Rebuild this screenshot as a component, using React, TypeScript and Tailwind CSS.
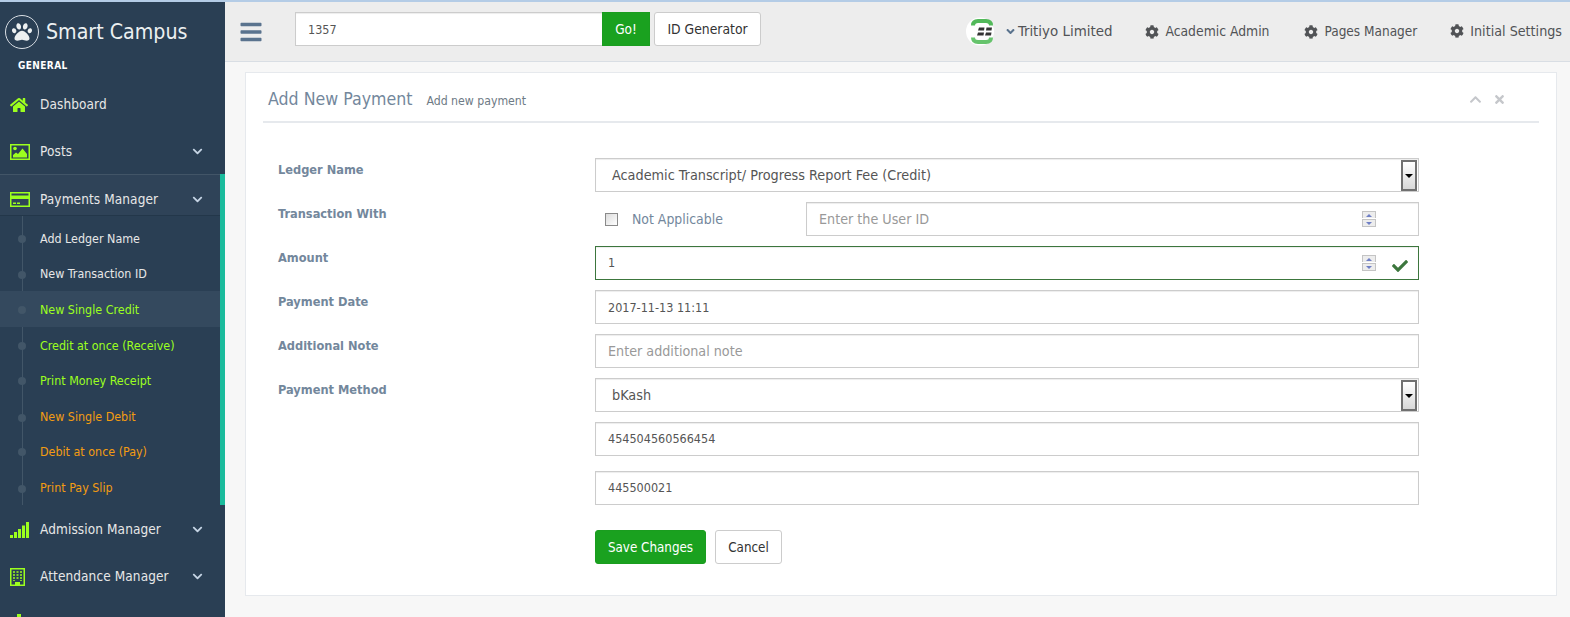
import React from "react";
import { FaHome, FaCog, FaPaw, FaBars, FaCheck, FaChevronUp, FaChevronDown, FaTimes, FaAngleDown } from "react-icons/fa";

const F = '[font-family:"DejaVu_Sans_Condensed","DejaVu_Sans",sans-serif]';

function ImageIcon() {
  return (
    <svg viewBox="0 0 20 16" className="h-[16px] w-[20px]" fill="#9CFF1E">
      <path fillRule="evenodd" d="M0 0 H20 V16 H0 Z M1.5 1.5 V14.5 H18.5 V1.5 Z" />
      <circle cx="5" cy="4.5" r="1.8" />
      <path d="M3 13.5 V11 L6 8.5 L8 10 L12.5 4.5 L17 10 V13.5 Z" />
    </svg>
  );
}

function CardIcon() {
  return (
    <svg viewBox="0 0 20 15" className="h-[15px] w-[20px]" fill="#9CFF1E">
      <path fillRule="evenodd" d="M0 0 H20 V15 H0 Z M1.5 1.5 V3.5 H18.5 V1.5 Z M1.5 7 V13.5 H18.5 V7 Z" />
      <rect x="3" y="10.5" width="3" height="1.5" />
      <rect x="7" y="10.5" width="3" height="1.5" />
    </svg>
  );
}

function SignalIcon() {
  return (
    <svg viewBox="0 0 19 16" className="h-[16px] w-[19px]" fill="#9CFF1E">
      <rect x="0" y="13" width="3" height="3" />
      <rect x="4" y="10" width="3" height="6" />
      <rect x="8" y="7" width="3" height="9" />
      <rect x="12" y="3.500" width="3" height="12.500" />
      <rect x="16" y="0" width="3" height="16" />
    </svg>
  );
}

function BuildingIcon() {
  return (
    <svg viewBox="0 0 15 18" className="h-[18px] w-[15px]" fill="#9CFF1E">
      <path fillRule="evenodd" d="M0 0 H15 V18 H0 Z M1.500 1.500 V16.500 H5 V14 H10 V16.500 H13.500 V1.500 Z" />
      <path d="M3 3 H5 V5 H3 Z M6.500 3 H8.500 V5 H6.500 Z M10 3 H12 V5 H10 Z M3 6 H5 V8 H3 Z M6.500 6 H8.500 V8 H6.500 Z M10 6 H12 V8 H10 Z M3 9 H5 V11 H3 Z M6.500 9 H8.500 V11 H6.500 Z M10 9 H12 V11 H10 Z M3 12 H5 V13 H3 Z M10 12 H12 V13 H10 Z" opacity="0.75" />
    </svg>
  );
}

function ChartIcon() {
  return (
    <svg viewBox="0 0 20 18" className="h-[18px] w-[20px]" fill="#9CFF1E">
      <rect x="0" y="9" width="4" height="9" />
      <rect x="7" y="0" width="4" height="18" />
      <rect x="14" y="5" width="4" height="13" />
    </svg>
  );
}

function Nav({ icon, label, chevron, active, size = "h-[47px]" }: { icon: React.ReactNode; label?: string; chevron?: boolean; active?: boolean; size?: string }) {
  return (
    <div className={`flex items-center ${size} pl-[10px] ${active ? "pr-[17px]" : "pr-[22px]"} text-[13.5px] text-[#E7E7E7]`}>
      <span className="flex w-[30px] text-[#9CFF1E]">{icon}</span>
      <span className="flex-1 tracking-[0.1px]">{label}</span>
      {chevron && <FaChevronDown className="text-[11px] text-[#C5D4E4]" />}
    </div>
  );
}

function Sub({ label, color, current, h }: { label: string; color: string; current?: boolean; h: string }) {
  return (
    <div className={`relative flex items-center ${h} pl-[40px] text-[12.4px] ${color} ${current ? "bg-[#34495E]" : ""}`}>
      <span className="absolute left-[18px] h-[8px] w-[8px] rounded-full bg-[#425668]" />
      {label}
    </div>
  );
}

function Field({ children, className = "h-[34px]", border = "border-[#CCCCCC]" }: { children: React.ReactNode; className?: string; border?: string }) {
  return <div className={`relative flex items-center border ${border} bg-white shadow-[inset_0_1px_1px_rgba(0,0,0,0.075)] ${className}`}>{children}</div>;
}

function Spin() {
  return (
    <span className="absolute right-[42px] top-[8px] flex h-[16px] w-[14px] flex-col justify-between">
      <span className="flex h-[7px] items-center justify-center border-x border-t border-[#C4C4C4] bg-[#EDEDED]"><span className="h-0 w-0 border-x-[3px] border-b-[3px] border-x-transparent border-b-[#6F7FC5]" /></span>
      <span className="flex h-[8px] items-center justify-center border border-[#C4C4C4] bg-[#EDEDED]"><span className="h-0 w-0 border-x-[3px] border-t-[3px] border-x-transparent border-t-[#6F7FC5]" /></span>
    </span>
  );
}

function Arrow() {
  return (
    <span className="absolute right-[1px] top-[1px] flex h-[31px] w-[16px] items-center justify-center border-2 border-[#707070] bg-gradient-to-b from-white to-[#D8D8D8]">
      <span className="h-0 w-0 border-x-[4px] border-t-[4px] border-x-transparent border-t-black" />
    </span>
  );
}

function Row({ label, mb = "mb-[10px]", children }: { label?: string; mb?: string; children: React.ReactNode }) {
  return (
    <div className={`flex ${mb}`}>
      <div className="w-[317px] pt-[4px] text-[12.7px] font-bold leading-[16px] text-[#73879C]">{label}</div>
      <div className="w-[824px]">{children}</div>
    </div>
  );
}

function TopLink({ label, ml = "ml-[33px]", size = "text-[13.8px]" }: { label: string; ml?: string; size?: string }) {
  return (
    <span className={`${ml} flex items-center gap-[6px] ${size} text-[#515356]`}>
      <FaCog className="text-[14px]" />
      {label}
    </span>
  );
}

const inputText = "w-full bg-transparent pl-[12px] text-[12.5px] text-[#555555] outline-none";
const inputLow = "w-full bg-transparent pl-[12px] pt-[2px] text-[12.5px] text-[#555555] outline-none";
const inputHolder = "w-full bg-transparent pl-[12px] pt-[2px] text-[14.2px] outline-none placeholder:text-[#999999]";

export default function App() {
  return (
    <div className={`flex h-[617px] w-[1570px] flex-col overflow-hidden bg-[#F7F7F7] ${F}`}>
      <div className="h-[2px] shrink-0 bg-[#B4CCE6]" />
      <div className="flex min-h-0 flex-1">
        <aside className="w-[225px] shrink-0 overflow-hidden bg-[#2A3F54]">
          <div className="flex h-[58px] items-center pb-[1px] pl-[5px] pt-[2px]">
            <span className="flex h-[34px] w-[34px] items-center justify-center rounded-full border border-[#D9DEE4] text-[20px] text-[#ECF0F1]"><FaPaw /></span>
            <span className="ml-[7px] text-[21.2px] text-[#ECF0F1]">Smart Campus</span>
          </div>
          <div className="pl-[18px] text-[10px] font-bold leading-[12px] tracking-[0.4px] text-white">GENERAL</div>
          <div className="h-[9px]" />
          <Nav icon={<FaHome className="text-[18px]" />} label="Dashboard" />
          <Nav icon={<ImageIcon />} label="Posts" chevron />
          <div className="mt-[-1px] border-r-[5px] border-[#1ABB9C]">
            <div className="border-y border-t-[#425567] border-b-[#23374A] bg-[#2F4358]">
              <Nav icon={<CardIcon />} label="Payments Manager" chevron active size="h-[40px] pt-[8px]" />
            </div>
            <div className="relative">
              <span className="absolute bottom-0 left-[22px] top-0 w-px bg-[#425668]" />
              <Sub label="Add Ledger Name" color="text-[#E7E7E7]" h="h-[40px] pt-[6px]" />
              <Sub label="New Transaction ID" color="text-[#E7E7E7]" h="h-[35px] pt-[2px]" />
              <Sub label="New Single Credit" color="text-[#9CFF1E]" current h="h-[36px] pt-[2px]" />
              <Sub label="Credit at once (Receive)" color="text-[#9CFF1E]" h="h-[36px] pt-[2px]" />
              <Sub label="Print Money Receipt" color="text-[#9CFF1E]" h="h-[36px]" />
              <Sub label="New Single Debit" color="text-[#F39C12]" h="h-[35px] pt-[2px]" />
              <Sub label="Debit at once (Pay)" color="text-[#F39C12]" h="h-[36px]" />
              <Sub label="Print Pay Slip" color="text-[#F39C12]" h="h-[35px] pt-[2px]" />
            </div>
          </div>
          <Nav icon={<SignalIcon />} label="Admission Manager" chevron size="h-[47px] pt-[2px]" />
          <Nav icon={<BuildingIcon />} label="Attendance Manager" chevron size="h-[47px] pt-[2px]" />
          <Nav icon={<ChartIcon />} />
        </aside>
        <main className="flex min-w-0 flex-1 flex-col">
          <header className="flex h-[60px] shrink-0 items-center border-b border-[#D9DEE4] bg-[#EDEDED] pl-[14px] pr-[8px]">
            <FaBars className="text-[24px] text-[#5A738E]" />
            <div className="ml-[32px] mt-[10px] flex h-[34px] w-[355px] self-start">
              <input readOnly value="1357" className="h-full min-w-0 flex-1 border border-r-0 border-[#CCCCCC] bg-white pl-[12px] text-[12.5px] text-[#555555] shadow-[inset_0_1px_1px_rgba(0,0,0,0.075)] outline-none" />
              <span className="flex h-full w-[48px] items-center justify-center border border-[#1A9D1F] bg-[#1AA11F] text-[13.5px] text-white">Go!</span>
            </div>
            <span className="ml-[4px] mt-[10px] flex h-[34px] w-[107px] items-center justify-center self-start rounded-[3px] border border-[#CCCCCC] bg-white text-[13.8px] text-[#333333]">ID Generator</span>
            <span className="flex-1" />
            <svg viewBox="0 0 28 29" className="h-[29px] w-[28px]">
              <circle cx="14" cy="14.500" r="14" fill="#FFFFFF" />
              <path d="M7 8.500 Q7 4 12 4 H20 Q25 4 25 8.500" fill="none" stroke="#52B95A" strokeWidth="4" />
              <path d="M7 20.500 Q7 25 12 25 H20 Q25 25 25 20.500" fill="none" stroke="#66C36C" strokeWidth="4" />
              <path d="M13 10.500 H18.500 L18 13.500 H12 Z M20.500 10.500 H26 L25.500 13.500 H20 Z M12 15.500 H18 L17.500 18.500 H11 Z M20 15.500 H25.500 L25 18.500 H19 Z" fill="#333333" />
            </svg>
            <span className="ml-[10px] flex items-center gap-[1px] text-[14.9px] text-[#515356]">
              <FaAngleDown className="text-[13px] text-[#5A738E]" />
              Tritiyo Limited
            </span>
            <TopLink label="Academic Admin" />
            <TopLink label="Pages Manager" ml="ml-[35px]" size="text-[13.5px]" />
            <TopLink label="Initial Settings" size="text-[14.2px]" />
          </header>
          <div className="px-[20px] pt-[10px]">
            <section className="h-[524px] w-[1312px] border border-[#E6E9ED] bg-white pl-[17px] pr-[17px]">
              <div className="flex h-[50px] items-center border-b-2 border-[#E6E9ED] pl-[5px] pr-[33px] pt-[4px]">
                <span className="text-[17.6px] text-[#73879C]">Add New Payment</span>
                <span className="ml-[14px] mt-[5px] text-[12.2px] text-[#6E7A85]">Add new payment</span>
                <span className="flex-1" />
                <FaChevronUp className="text-[13px] text-[#C5C7CB]" />
                <FaTimes className="ml-[11px] text-[13px] text-[#C5C7CB]" />
              </div>
              <div className="pl-[15px] pt-[35px]">
                <Row label="Ledger Name">
                  <Field>
                    <span className="pl-[16px] pt-[2px] text-[14.3px] text-[#555555]">Academic Transcript/ Progress Report Fee (Credit)</span>
                    <Arrow />
                  </Field>
                </Row>
                <Row label="Transaction With">
                  <div className="flex h-[34px] items-center">
                    <span className="ml-[10px] h-[13px] w-[13px] border border-[#8A8A8A] bg-gradient-to-br from-[#DCDCDC] to-white" />
                    <span className="ml-[14px] w-[174px] pt-[1px] text-[13.9px] text-[#73879C]">Not Applicable</span>
                    <Field className="h-[34px] flex-1">
                      <input readOnly placeholder="Enter the User ID" className={inputHolder} />
                      <Spin />
                    </Field>
                  </div>
                </Row>
                <Row label="Amount">
                  <Field border="border-[#3C763D]">
                    <input readOnly value="1" className={inputText} />
                    <Spin />
                    <FaCheck className="absolute right-[10px] top-[11px] text-[16px] text-[#3C763D]" />
                  </Field>
                </Row>
                <Row label="Payment Date">
                  <Field><input readOnly value="2017-11-13 11:11" className={inputLow} /></Field>
                </Row>
                <Row label="Additional Note">
                  <Field><input readOnly placeholder="Enter additional note" className={inputHolder} /></Field>
                </Row>
                <Row label="Payment Method">
                  <Field>
                    <span className="pl-[16px] pt-[2px] text-[14.3px] text-[#555555]">bKash</span>
                    <Arrow />
                  </Field>
                </Row>
                <Row mb="mb-[15px]">
                  <Field><input readOnly value="454504560566454" className={inputText} /></Field>
                </Row>
                <Row mb="mb-[25px]">
                  <Field><input readOnly value="445500021" className={inputText} /></Field>
                </Row>
                <Row>
                  <div className="flex gap-[9px]">
                    <span className="flex h-[34px] w-[111px] items-center justify-center rounded-[3px] border border-[#1A9D1F] bg-[#1AA11F] pt-[2px] text-[13.3px] text-white">Save Changes</span>
                    <span className="flex h-[34px] w-[67px] items-center justify-center rounded-[3px] border border-[#CCCCCC] bg-white pt-[2px] text-[13.3px] text-[#333333]">Cancel</span>
                  </div>
                </Row>
              </div>
            </section>
          </div>
        </main>
      </div>
    </div>
  );
}
